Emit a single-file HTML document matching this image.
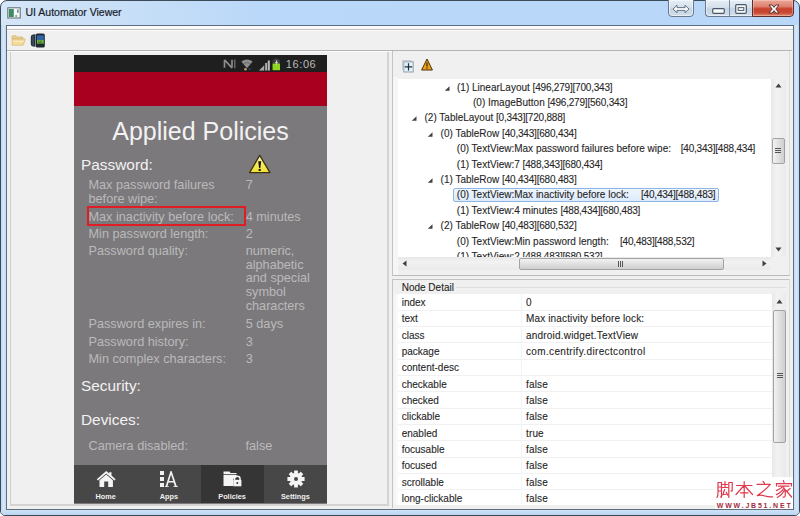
<!DOCTYPE html>
<html><head><meta charset="utf-8">
<style>
*{margin:0;padding:0;box-sizing:border-box}
html,body{width:800px;height:516px;overflow:hidden;background:#fff}
body{position:relative;font-family:"Liberation Sans",sans-serif}
.a{position:absolute}
.t{position:absolute;white-space:pre;line-height:1}
</style></head><body>
<div class="a" style="left:0;top:0;width:800px;height:516px;border-radius:7px 7px 5px 5px;background:linear-gradient(90deg,#d5e6f7 0px,#c8dff7 120px,#bad8f9 260px,#b8d7f9 100%);border:1px solid #3d4a57"></div>
<svg class="a" style="left:6.5px;top:6.5px" width="14" height="12" viewBox="0 0 14 12">
 <rect x="0.8" y="0.8" width="12.4" height="10.2" fill="#f4f9fb" stroke="#5e6870" stroke-width="1"/>
 <rect x="1.8" y="2" width="5" height="8" fill="#3f8c64"/>
 <rect x="8.2" y="8" width="2" height="2" fill="#9aa890"/>
 <rect x="10.4" y="2.4" width="1" height="3.4" fill="#404850"/>
</svg>
<div class="t" style="left:25.50px;top:7.00px;font-size:10.5px;color:#18222c;-webkit-text-stroke:0.2px #18222c;">UI Automator Viewer</div>
<div class="a" style="left:1px;top:25px;width:5px;height:486px;background:linear-gradient(90deg,#bdd6f2,#d6e7f8 50%,#c4dbf4)"></div>
<div class="a" style="left:794px;top:25px;width:5px;height:486px;background:linear-gradient(90deg,#c4dbf4,#d6e7f8 50%,#bdd6f2)"></div>
<div class="a" style="left:1px;top:510px;width:798px;height:5px;border-radius:0 0 4px 4px;background:linear-gradient(#d0e3f7,#c2daf4 60%,#b8d3f0)"></div>
<div class="a" style="left:668px;top:-1px;width:26px;height:18px;border:1px solid #6a7a8c;border-radius:0 0 4px 4px;background:linear-gradient(#e6eef6,#d6e1ec 45%,#c4d3e3 55%,#d2deea);box-shadow:inset 0 0 0 1px rgba(255,255,255,0.5)"></div>
<div class="a" style="left:705px;top:-1px;width:48px;height:18px;border:1px solid #6a7a8c;border-right:none;border-radius:0 0 0 4px;background:linear-gradient(#e6eef6,#d6e1ec 45%,#c4d3e3 55%,#d2deea);box-shadow:inset 0 0 0 1px rgba(255,255,255,0.5)"></div>
<div class="a" style="left:729px;top:0;width:1px;height:16px;background:#7a8a9c"></div>
<div class="a" style="left:752px;top:-1px;width:42px;height:18px;border:1px solid #5a3030;border-radius:0 0 4px 0;background:linear-gradient(#eba99a,#de8070 40%,#c8412c 55%,#c94a35 80%,#e08a70);box-shadow:inset 0 0 0 1px rgba(255,220,210,0.4)"></div>
<svg class="a" style="left:672px;top:4px" width="18" height="10" viewBox="0 0 18 10">
 <path d="M1 5L5 1.2V3.6H13V1.2L17 5L13 8.8V6.4H5V8.8z" fill="#fafafa" stroke="#56687c" stroke-width="0.9" stroke-linejoin="round"/>
</svg>
<svg class="a" style="left:712px;top:7.5px" width="13" height="6" viewBox="0 0 13 6">
 <rect x="0.7" y="0.7" width="11.6" height="4.6" rx="1" fill="#fafafa" stroke="#4a5a6c" stroke-width="1.2"/>
</svg>
<svg class="a" style="left:735px;top:3.5px" width="12" height="10" viewBox="0 0 12 10">
 <rect x="0.7" y="0.7" width="10.6" height="8.6" rx="1" fill="#fafafa" stroke="#4a5a6c" stroke-width="1.2"/>
 <rect x="3.2" y="3.6" width="5.6" height="2.8" fill="#fafafa" stroke="#4a5a6c" stroke-width="1"/>
</svg>
<svg class="a" style="left:768px;top:3.5px" width="12" height="10" viewBox="0 0 12 10">
 <path d="M1 1H4.2L6 3.4L7.8 1H11L7.8 5L11 9H7.8L6 6.6L4.2 9H1L4.2 5z" fill="#fbfbfb" stroke="#4a2a26" stroke-width="0.9" stroke-linejoin="round"/>
</svg>
<div class="a" style="left:6px;top:25px;width:788px;height:485px;border:1px solid #5f6e7e;background:#f0f0f0"></div>
<div class="a" style="left:7px;top:26px;width:786px;height:3px;background:#fafafa"></div>
<div class="a" style="left:7px;top:29px;width:786px;height:1px;background:#c4c1be"></div>
<div class="a" style="left:7px;top:30px;width:786px;height:1px;background:#fcfcfc"></div>
<svg class="a" style="left:11px;top:35px" width="15" height="11" viewBox="0 0 15 11">
 <path d="M1 1.5Q1 0.8 1.8 0.8H5L6.2 2H11.5Q12 2 12 2.6V4H1z" fill="#e9cf8f" stroke="#d2b26a" stroke-width="0.7"/>
 <path d="M1.2 4.2H14.3L12.2 10.2H1.2z" fill="#f5dc9c" stroke="#d6b56c" stroke-width="0.7"/>
 <path d="M2.5 6.5H12.5" stroke="#fbecc0" stroke-width="1"/>
</svg>
<svg class="a" style="left:30px;top:33px" width="16" height="15" viewBox="0 0 16 15">
 <path d="M0.8 4Q0.8 1.8 3 1.6L5.5 1.2V13.8L3 13.4Q0.8 13.2 0.8 11z" fill="#26323c"/>
 <path d="M3 2.5V12.5" stroke="#5a6a78" stroke-width="0.8"/>
 <path d="M5.5 1.4V13.6" stroke="#a8b4c0" stroke-width="0.5"/>
 <rect x="5.8" y="0.6" width="9" height="14" rx="1.6" fill="#1e2830"/>
 <rect x="7" y="2.4" width="6.8" height="4.6" fill="#2f66a8"/>
 <rect x="7" y="7" width="6.8" height="3.6" fill="#6cb03c"/>
 <path d="M8 8.2h1.2M10.2 8.2h1.4M8.6 9.4h2.6" stroke="#2a4a20" stroke-width="0.6"/>
</svg>
<div class="a" style="left:10px;top:51px;width:379px;height:455px;border-left:1px solid #cfcfcf;border-top:1px solid #e0e0e0;border-right:2px solid #d4d4d4;border-bottom:2px solid #d6d3d0;background:#f0f0f0"></div>
<div class="a" style="left:7px;top:50px;width:785px;height:1px;background:#b4b4b4"></div>
<div class="a" style="left:7px;top:51px;width:785px;height:1px;background:#fafafa"></div>
<div class="a" style="left:74px;top:55px;width:253px;height:448.5px;background:#7c797c;overflow:hidden">
 <div class="a" style="left:0;top:0;width:253px;height:16.5px;background:#1f1f20"></div>
 <div class="a" style="left:0;top:16.5px;width:253px;height:34.5px;background:#a8001e"></div>
 <div class="a" style="left:0;top:410px;width:253px;height:38px;background:#474747"></div>
 <div class="a" style="left:127px;top:410px;width:63px;height:38px;background:#353535"></div>
</div>
<div class="t" style="left:100.50px;width:200px;text-align:center;top:118.60px;font-size:25px;color:#f2f2f2;">Applied Policies</div>
<div class="t" style="left:81.00px;top:157.00px;font-size:15.4px;color:#f2f2f2;">Password:</div>
<div class="t" style="left:88.50px;top:179.40px;font-size:12.7px;color:#bababa;">Max password failures</div>
<div class="t" style="left:88.50px;top:192.90px;font-size:12.7px;color:#bababa;">before wipe:</div>
<div class="t" style="left:245.70px;top:179.40px;font-size:12.7px;color:#bababa;">7</div>
<div class="t" style="left:88.50px;top:210.90px;font-size:12.7px;color:#bababa;">Max inactivity before lock:</div>
<div class="t" style="left:245.70px;top:210.90px;font-size:12.7px;color:#bababa;">4 minutes</div>
<div class="t" style="left:88.50px;top:228.00px;font-size:12.7px;color:#bababa;">Min password length:</div>
<div class="t" style="left:245.70px;top:228.00px;font-size:12.7px;color:#bababa;">2</div>
<div class="t" style="left:88.50px;top:245.00px;font-size:12.7px;color:#bababa;">Password quality:</div>
<div class="t" style="left:245.70px;top:245.00px;font-size:12.7px;color:#bababa;">numeric,</div>
<div class="t" style="left:245.70px;top:258.70px;font-size:12.7px;color:#bababa;">alphabetic</div>
<div class="t" style="left:245.70px;top:272.40px;font-size:12.7px;color:#bababa;">and special</div>
<div class="t" style="left:245.70px;top:286.10px;font-size:12.7px;color:#bababa;">symbol</div>
<div class="t" style="left:245.70px;top:299.80px;font-size:12.7px;color:#bababa;">characters</div>
<div class="t" style="left:88.50px;top:317.90px;font-size:12.7px;color:#bababa;">Password expires in:</div>
<div class="t" style="left:245.70px;top:317.90px;font-size:12.7px;color:#bababa;">5 days</div>
<div class="t" style="left:88.50px;top:335.90px;font-size:12.7px;color:#bababa;">Password history:</div>
<div class="t" style="left:245.70px;top:335.90px;font-size:12.7px;color:#bababa;">3</div>
<div class="t" style="left:88.50px;top:353.00px;font-size:12.7px;color:#bababa;">Min complex characters:</div>
<div class="t" style="left:245.70px;top:353.00px;font-size:12.7px;color:#bababa;">3</div>
<div class="t" style="left:81.00px;top:378.20px;font-size:15.4px;color:#f2f2f2;">Security:</div>
<div class="t" style="left:81.00px;top:412.20px;font-size:15.4px;color:#f2f2f2;">Devices:</div>
<div class="t" style="left:88.50px;top:439.80px;font-size:12.7px;color:#bababa;">Camera disabled:</div>
<div class="t" style="left:245.50px;top:439.80px;font-size:12.7px;color:#bababa;">false</div>
<div class="a" style="left:86.6px;top:205.8px;width:159.2px;height:19.8px;border:2.2px solid #e01c24"></div>
<svg class="a" style="left:249px;top:153.5px" width="22" height="20" viewBox="0 0 22 20">
 <defs><linearGradient id="wg" x1="0" y1="0" x2="0" y2="1"><stop offset="0" stop-color="#fffbe0"/><stop offset="0.45" stop-color="#f8ec60"/><stop offset="1" stop-color="#efe030"/></linearGradient></defs>
 <path d="M10.7 1.4L21 18.6H0.6z" fill="url(#wg)" stroke="#3c3410" stroke-width="1.3" stroke-linejoin="round"/>
 <path d="M9.2 7.2H12.2L11.3 14H10.1z" fill="#111"/>
 <circle cx="10.7" cy="15.9" r="1.2" fill="#111"/>
</svg>
<div class="t" style="left:285.80px;top:58.60px;font-size:11px;color:#b9b9b9;letter-spacing:0.6px;">16:06</div>
<svg class="a" style="left:223px;top:58px" width="60" height="13" viewBox="0 0 60 13">
 <path d="M1.5 1.8v8M1.5 1.8l7.5 8M9 1.8v8" stroke="#8c8c8c" stroke-width="1.7" fill="none"/>
 <path d="M11.8 1.5v8.8" stroke="#7a7a7a" stroke-width="1.2"/>
 <path d="M18.3 3.6q5.7-4.2 11.4 0l-5.7 6.6z" fill="#8e8e8e"/>
 <path d="M20.8 5.6q3.2-2.2 6.4 0" stroke="#5a5a5a" stroke-width="0.7" fill="none"/>
 <circle cx="22.5" cy="11.3" r="1.3" fill="#d89a60"/>
 <path d="M25.5 10.3l1.2 1.6l1.2-1.6" stroke="#2a5090" stroke-width="1" fill="none"/>
 <path d="M36 12.5L47 1.5V12.5z" fill="#3c3c3c"/>
 <path d="M36 12.5L41 7.5V12.5z" fill="#a8a8a8"/>
 <rect x="42.2" y="5" width="1.8" height="7.5" fill="#b0b0b0"/>
 <rect x="44.8" y="2.5" width="2" height="10" fill="#b8b8b8"/>
 <rect x="51.8" y="0.6" width="2.6" height="1.2" fill="#505050"/>
 <rect x="49.6" y="1.6" width="7.4" height="10.6" rx="0.6" fill="#3e3e3e"/>
 <rect x="49.6" y="5.6" width="7.4" height="6.6" fill="#8ed61c"/>
 <path d="M53.6 2.2l-1.6 3h1.5l-0.7 2.4l2.4-3.4h-1.6l0.8-2z" fill="#e8e8e8"/>
</svg>
<svg class="a" style="left:96px;top:470px" width="20" height="18" viewBox="0 0 20 18">
 <path d="M10.2 1L0.8 9.2L2 10.4L10.2 3.4L18.4 10.4L19.6 9.2L15.5 5.6V2.2H13.2V3.6z" fill="#f4f4f4"/>
 <path d="M3.5 10.2L10.2 4.6L16.9 10.2V17H12.2V11.5H8.2V17H3.5z" fill="#f4f4f4"/>
</svg>
<svg class="a" style="left:159px;top:470px" width="20" height="18" viewBox="0 0 20 18">
 <rect x="1" y="1" width="4" height="4" fill="#f2f2f2"/>
 <rect x="1" y="7" width="4" height="4" fill="#f2f2f2"/>
 <rect x="1" y="13" width="4" height="4" fill="#f2f2f2"/>
 <path d="M11.5 1L6.6 16.2H5.8V17H9.8V16.2H8.4L9.6 12.4H14.6L15.9 16.2H14.4V17H19V16.2H17.8L12.6 1z M10 11.1L12.1 4.6L14.2 11.1z" fill="#f2f2f2" fill-rule="evenodd"/>
</svg>
<svg class="a" style="left:223px;top:471px" width="19" height="16" viewBox="0 0 19 16">
 <path d="M0.5 0.5H6.5L7.5 2H13.5V3.2H0.5z" fill="#f4f4f4"/>
 <path d="M0.5 4H13.5V6.5Q10 6.5 10 10V15H0.5z" fill="#f4f4f4"/>
 <path d="M11.6 9V7.6Q11.6 5.2 14.3 5.2Q17 5.2 17 7.6V9" stroke="#f4f4f4" stroke-width="1.5" fill="none"/>
 <rect x="10.2" y="8.8" width="8.2" height="6.5" fill="#f4f4f4"/>
 <circle cx="14.3" cy="12" r="1" fill="#353535"/>
</svg>
<svg class="a" style="left:286.5px;top:470px" width="18" height="18" viewBox="-9 -9 18 18">
 <g fill="#f4f4f4">
  <circle r="6.2"/>
  <rect x="-1.9" y="-8.6" width="3.8" height="17.2" rx="0.5"/>
  <rect x="-1.9" y="-8.6" width="3.8" height="17.2" rx="0.5" transform="rotate(45)"/>
  <rect x="-1.9" y="-8.6" width="3.8" height="17.2" rx="0.5" transform="rotate(90)"/>
  <rect x="-1.9" y="-8.6" width="3.8" height="17.2" rx="0.5" transform="rotate(135)"/>
 </g>
 <circle r="2" fill="#474747"/>
</svg>
<div class="t" style="left:5.60px;width:200px;text-align:center;top:493.20px;font-size:7.3px;color:#f0f0f0;font-weight:bold;">Home</div>
<div class="t" style="left:68.90px;width:200px;text-align:center;top:493.20px;font-size:7.3px;color:#f0f0f0;font-weight:bold;">Apps</div>
<div class="t" style="left:132.10px;width:200px;text-align:center;top:493.20px;font-size:7.3px;color:#f0f0f0;font-weight:bold;">Policies</div>
<div class="t" style="left:195.40px;width:200px;text-align:center;top:493.20px;font-size:7.3px;color:#f0f0f0;font-weight:bold;">Settings</div>
<div class="a" style="left:392px;top:51px;width:398px;height:225px;border-left:1px solid #c4c4c4;border-right:1px solid #dcdcdc;border-bottom:1px solid #bababa;background:#f0f0f0"></div>
<div class="a" style="left:393px;top:77px;width:5px;height:198px;background:#f6f6f6"></div>
<div class="a" style="left:398px;top:79px;width:373px;height:178px;background:#fff;overflow:hidden">
<svg class="a" style="left:45.60px;top:6.60px" width="6" height="5" viewBox="0 0 6 5"><path d="M5.5 0.3V4.7H0.8z" fill="#404040"/></svg>
<div class="t" style="left:59.00px;top:3.60px;font-size:10px;color:#262626;-webkit-text-stroke:0.1px #262626;">(1) LinearLayout <span style="letter-spacing:-0.2px">[496,279][700,343]</span></div>
<div class="t" style="left:75.00px;top:19.01px;font-size:10px;color:#262626;-webkit-text-stroke:0.1px #262626;">(0) ImageButton <span style="letter-spacing:-0.2px">[496,279][560,343]</span></div>
<svg class="a" style="left:13.10px;top:37.42px" width="6" height="5" viewBox="0 0 6 5"><path d="M5.5 0.3V4.7H0.8z" fill="#404040"/></svg>
<div class="t" style="left:26.50px;top:34.42px;font-size:10px;color:#262626;-webkit-text-stroke:0.1px #262626;">(2) TableLayout <span style="letter-spacing:-0.2px">[0,343][720,888]</span></div>
<svg class="a" style="left:29.20px;top:52.83px" width="6" height="5" viewBox="0 0 6 5"><path d="M5.5 0.3V4.7H0.8z" fill="#404040"/></svg>
<div class="t" style="left:42.60px;top:49.83px;font-size:10px;color:#262626;-webkit-text-stroke:0.1px #262626;">(0) TableRow <span style="letter-spacing:-0.2px">[40,343][680,434]</span></div>
<div class="t" style="left:58.80px;top:65.24px;font-size:10px;color:#262626;-webkit-text-stroke:0.1px #262626;">(0) TextView:Max password failures before wipe:</div>
<div class="t" style="left:282.70px;top:65.24px;font-size:10px;color:#262626;-webkit-text-stroke:0.1px #262626;letter-spacing:-0.2px;">[40,343][488,434]</div>
<div class="t" style="left:58.80px;top:80.65px;font-size:10px;color:#262626;-webkit-text-stroke:0.1px #262626;">(1) TextView:7 <span style="letter-spacing:-0.2px">[488,343][680,434]</span></div>
<svg class="a" style="left:29.20px;top:99.06px" width="6" height="5" viewBox="0 0 6 5"><path d="M5.5 0.3V4.7H0.8z" fill="#404040"/></svg>
<div class="t" style="left:42.60px;top:96.06px;font-size:10px;color:#262626;-webkit-text-stroke:0.1px #262626;">(1) TableRow <span style="letter-spacing:-0.2px">[40,434][680,483]</span></div>
<div class="a" style="left:55.39999999999998px;top:108.9px;width:266px;height:14.5px;border:1px solid #8fb6e3;border-radius:2px;background:linear-gradient(#eef5fd,#dcebfc)"></div>
<div class="t" style="left:58.80px;top:111.47px;font-size:10px;color:#262626;-webkit-text-stroke:0.1px #262626;">(0) TextView:Max inactivity before lock:</div>
<div class="t" style="left:243.00px;top:111.47px;font-size:10px;color:#262626;-webkit-text-stroke:0.1px #262626;letter-spacing:-0.2px;">[40,434][488,483]</div>
<div class="t" style="left:58.80px;top:126.88px;font-size:10px;color:#262626;-webkit-text-stroke:0.1px #262626;">(1) TextView:4 minutes <span style="letter-spacing:-0.2px">[488,434][680,483]</span></div>
<svg class="a" style="left:29.20px;top:145.29px" width="6" height="5" viewBox="0 0 6 5"><path d="M5.5 0.3V4.7H0.8z" fill="#404040"/></svg>
<div class="t" style="left:42.60px;top:142.29px;font-size:10px;color:#262626;-webkit-text-stroke:0.1px #262626;">(2) TableRow <span style="letter-spacing:-0.2px">[40,483][680,532]</span></div>
<div class="t" style="left:58.80px;top:157.70px;font-size:10px;color:#262626;-webkit-text-stroke:0.1px #262626;">(0) TextView:Min password length:</div>
<div class="t" style="left:222.00px;top:157.70px;font-size:10px;color:#262626;-webkit-text-stroke:0.1px #262626;letter-spacing:-0.2px;">[40,483][488,532]</div>
<div class="t" style="left:58.80px;top:173.11px;font-size:10px;color:#262626;-webkit-text-stroke:0.1px #262626;">(1) TextView:2 <span style="letter-spacing:-0.2px">[488,483][680,532]</span></div>
</div>
<div class="a" style="left:771px;top:79px;width:15px;height:178px;background:linear-gradient(90deg,#e8e8e8,#f2f2f2 40%,#eaeaea)"></div>
<svg class="a" style="left:775px;top:83px" width="7" height="5" viewBox="0 0 7 5"><path d="M3.5 0.5L6.5 4.5H0.5z" fill="#404040"/></svg>
<svg class="a" style="left:775px;top:247px" width="7" height="5" viewBox="0 0 7 5"><path d="M3.5 4.5L6.5 0.5H0.5z" fill="#404040"/></svg>
<div class="a" style="left:771.5px;top:138px;width:13px;height:26px;border:1px solid #a3a3a3;border-radius:2px;background:linear-gradient(90deg,#f2f2f2,#e0e0e0 50%,#cfcfcf)"></div>
<div class="a" style="left:775px;top:148px;width:6px;height:1px;background:#555;box-shadow:0 2px 0 #555,0 4px 0 #555"></div>
<div class="a" style="left:398px;top:257px;width:373px;height:13px;background:linear-gradient(#e8e8e8,#f2f2f2 40%,#eaeaea)"></div>
<div class="a" style="left:771px;top:257px;width:15px;height:13px;background:#f0f0f0"></div>
<svg class="a" style="left:402px;top:260px" width="5" height="7" viewBox="0 0 5 7"><path d="M0.5 3.5L4.5 0.5V6.5z" fill="#404040"/></svg>
<svg class="a" style="left:762px;top:260px" width="5" height="7" viewBox="0 0 5 7"><path d="M4.5 3.5L0.5 0.5V6.5z" fill="#404040"/></svg>
<div class="a" style="left:518.5px;top:257.5px;width:205px;height:12px;border:1px solid #a3a3a3;border-radius:2px;background:linear-gradient(#f2f2f2,#e0e0e0 50%,#cfcfcf)"></div>
<div class="a" style="left:618px;top:260.5px;width:1px;height:6px;background:#555;box-shadow:2px 0 0 #555,4px 0 0 #555"></div>
<svg class="a" style="left:402px;top:59.5px" width="12" height="13" viewBox="0 0 12 13">
 <path d="M0.6 10V0.6H9.5" fill="none" stroke="#c0c8d0" stroke-width="1"/>
 <rect x="1.8" y="1.8" width="9.4" height="10.2" fill="#e2f2fb" stroke="#9aa6b2" stroke-width="1.1"/>
 <path d="M6.5 3.2V10.6M2.8 6.9H10.2" stroke="#1e2e3c" stroke-width="1.2"/>
</svg>
<svg class="a" style="left:421px;top:58px" width="12" height="13" viewBox="0 0 12 13">
 <path d="M6 1L11.4 12H0.6z" fill="#e8a020" stroke="#4a3000" stroke-width="1" stroke-linejoin="round"/>
 <path d="M6 4.6V8.6" stroke="#2a1800" stroke-width="1.1"/>
 <rect x="5.4" y="9.4" width="1.2" height="1.2" fill="#2a1800"/>
</svg>
<div class="a" style="left:392px;top:279px;width:398px;height:229px;border-top:1px solid #c2c2c2;border-left:1px solid #c4c4c4;border-right:1px solid #dcdcdc;background:#f0f0f0"></div>
<div class="a" style="left:393px;top:294px;width:380px;height:211px;background:linear-gradient(90deg,#f2f2f2,#fbfbfb 5px,#fbfbfb)"></div>
<div class="t" style="left:401.70px;top:283.40px;font-size:10px;color:#262626;-webkit-text-stroke:0.1px #262626;">Node Detail</div>
<div class="a" style="left:456px;top:287px;width:330px;height:1px;background:#dedede"></div>
<div class="a" style="left:398px;top:294px;width:374px;height:211px;background:#fff;overflow:hidden">
<div class="a" style="left:0;top:15.60px;width:374px;height:1px;background:#f1f1f1"></div>
<div class="t" style="left:3.70px;top:3.90px;font-size:10px;color:#262626;-webkit-text-stroke:0.1px #262626;">index</div>
<div class="t" style="left:128.00px;top:3.90px;font-size:10px;color:#262626;-webkit-text-stroke:0.1px #262626;letter-spacing:0.15px;">0</div>
<div class="a" style="left:0;top:31.93px;width:374px;height:1px;background:#f1f1f1"></div>
<div class="t" style="left:3.70px;top:20.23px;font-size:10px;color:#262626;-webkit-text-stroke:0.1px #262626;">text</div>
<div class="t" style="left:128.00px;top:20.23px;font-size:10px;color:#262626;-webkit-text-stroke:0.1px #262626;letter-spacing:0.14px;">Max inactivity before lock:</div>
<div class="a" style="left:0;top:48.26px;width:374px;height:1px;background:#f1f1f1"></div>
<div class="t" style="left:3.70px;top:36.56px;font-size:10px;color:#262626;-webkit-text-stroke:0.1px #262626;">class</div>
<div class="t" style="left:128.00px;top:36.56px;font-size:10px;color:#262626;-webkit-text-stroke:0.1px #262626;letter-spacing:0.2px;">android.widget.TextView</div>
<div class="a" style="left:0;top:64.59px;width:374px;height:1px;background:#f1f1f1"></div>
<div class="t" style="left:3.70px;top:52.89px;font-size:10px;color:#262626;-webkit-text-stroke:0.1px #262626;">package</div>
<div class="t" style="left:128.00px;top:52.89px;font-size:10px;color:#262626;-webkit-text-stroke:0.1px #262626;letter-spacing:0.35px;">com.centrify.directcontrol</div>
<div class="a" style="left:0;top:80.92px;width:374px;height:1px;background:#f1f1f1"></div>
<div class="t" style="left:3.70px;top:69.22px;font-size:10px;color:#262626;-webkit-text-stroke:0.1px #262626;">content-desc</div>
<div class="t" style="left:128.00px;top:69.22px;font-size:10px;color:#262626;-webkit-text-stroke:0.1px #262626;letter-spacing:0.15px;"></div>
<div class="a" style="left:0;top:97.25px;width:374px;height:1px;background:#f1f1f1"></div>
<div class="t" style="left:3.70px;top:85.55px;font-size:10px;color:#262626;-webkit-text-stroke:0.1px #262626;">checkable</div>
<div class="t" style="left:128.00px;top:85.55px;font-size:10px;color:#262626;-webkit-text-stroke:0.1px #262626;letter-spacing:0.15px;">false</div>
<div class="a" style="left:0;top:113.58px;width:374px;height:1px;background:#f1f1f1"></div>
<div class="t" style="left:3.70px;top:101.88px;font-size:10px;color:#262626;-webkit-text-stroke:0.1px #262626;">checked</div>
<div class="t" style="left:128.00px;top:101.88px;font-size:10px;color:#262626;-webkit-text-stroke:0.1px #262626;letter-spacing:0.15px;">false</div>
<div class="a" style="left:0;top:129.91px;width:374px;height:1px;background:#f1f1f1"></div>
<div class="t" style="left:3.70px;top:118.21px;font-size:10px;color:#262626;-webkit-text-stroke:0.1px #262626;">clickable</div>
<div class="t" style="left:128.00px;top:118.21px;font-size:10px;color:#262626;-webkit-text-stroke:0.1px #262626;letter-spacing:0.15px;">false</div>
<div class="a" style="left:0;top:146.24px;width:374px;height:1px;background:#f1f1f1"></div>
<div class="t" style="left:3.70px;top:134.54px;font-size:10px;color:#262626;-webkit-text-stroke:0.1px #262626;">enabled</div>
<div class="t" style="left:128.00px;top:134.54px;font-size:10px;color:#262626;-webkit-text-stroke:0.1px #262626;letter-spacing:0.15px;">true</div>
<div class="a" style="left:0;top:162.57px;width:374px;height:1px;background:#f1f1f1"></div>
<div class="t" style="left:3.70px;top:150.87px;font-size:10px;color:#262626;-webkit-text-stroke:0.1px #262626;">focusable</div>
<div class="t" style="left:128.00px;top:150.87px;font-size:10px;color:#262626;-webkit-text-stroke:0.1px #262626;letter-spacing:0.15px;">false</div>
<div class="a" style="left:0;top:178.90px;width:374px;height:1px;background:#f1f1f1"></div>
<div class="t" style="left:3.70px;top:167.20px;font-size:10px;color:#262626;-webkit-text-stroke:0.1px #262626;">focused</div>
<div class="t" style="left:128.00px;top:167.20px;font-size:10px;color:#262626;-webkit-text-stroke:0.1px #262626;letter-spacing:0.15px;">false</div>
<div class="a" style="left:0;top:195.23px;width:374px;height:1px;background:#f1f1f1"></div>
<div class="t" style="left:3.70px;top:183.53px;font-size:10px;color:#262626;-webkit-text-stroke:0.1px #262626;">scrollable</div>
<div class="t" style="left:128.00px;top:183.53px;font-size:10px;color:#262626;-webkit-text-stroke:0.1px #262626;letter-spacing:0.15px;">false</div>
<div class="a" style="left:0;top:211.56px;width:374px;height:1px;background:#f1f1f1"></div>
<div class="t" style="left:3.70px;top:199.86px;font-size:10px;color:#262626;-webkit-text-stroke:0.1px #262626;">long-clickable</div>
<div class="t" style="left:128.00px;top:199.86px;font-size:10px;color:#262626;-webkit-text-stroke:0.1px #262626;letter-spacing:0.15px;">false</div>
<div class="a" style="left:122.5px;top:0;width:1px;height:212px;background:#f1f3f5"></div>
</div>
<div class="a" style="left:772px;top:293px;width:14px;height:212px;background:linear-gradient(90deg,#e8e8e8,#f2f2f2 40%,#eaeaea)"></div>
<svg class="a" style="left:776px;top:299px" width="7" height="5" viewBox="0 0 7 5"><path d="M3.5 0.5L6.5 4.5H0.5z" fill="#404040"/></svg>
<div class="a" style="left:773px;top:309.5px;width:12.5px;height:133px;border:1px solid #a3a3a3;border-radius:2px;background:linear-gradient(90deg,#f2f2f2,#e0e0e0 50%,#cfcfcf)"></div>
<div class="a" style="left:776.5px;top:372.5px;width:6px;height:1px;background:#555;box-shadow:0 2px 0 #555,0 4px 0 #555"></div>
<div class="a" style="left:715px;top:477px;width:78px;height:32px;background:rgba(255,255,255,0.92)"></div>
<svg class="a" style="left:716px;top:480px" width="78" height="30" viewBox="0 0 78 30">
 <g stroke="#e0384c" stroke-width="1.2" fill="none" stroke-linecap="round">
  <path d="M2 2.5V12.5Q2 16 1 17.5M2 2.5H5.5V17Q5.5 17.5 4.5 17M2 7H5.5M2 11H5.5"/>
  <path d="M6.6 4.5H11.4M9 1.5V7.5M6.3 7.5H11.8M8.6 9.5L6.8 14.8L11.3 14M10.3 12.2L11.8 15.2"/>
  <path d="M12.8 2.5H16.2V10.5Q16.2 11.5 15 11M12.8 2.5V17.5"/>
  <path d="M20.5 5.5H36M28.2 1.5V17.5M27.6 6L20 14.5M28.8 6L36.5 14.5M24.5 12.8H32"/>
  <path d="M47 1.4L48.4 3.2M41 4.3H54.3M54.3 4.3Q50 9.5 41.4 15.6M41.4 15.6Q45 14.6 49 16Q52 17 56.6 16.8"/>
  <path d="M67.4 0.6L68 2.4M60.5 6V3.6H75.5V6M62.5 6.2H73M67 6.6Q64 9 60.4 10.6M67.6 8.6Q66 12 60.4 14.6M68.4 10.2Q66 15 61.4 17.6M67.8 7.6Q70.2 11 69 16.4Q68.5 17.5 67 17M69.6 10L75.6 17M74.2 8.4L71 11.2"/>
 </g>
</svg>
<div class="t" style="left:716.80px;top:502.00px;font-size:7px;color:#a52a3c;font-weight:bold;letter-spacing:1.8px;">WWW.JB51.NET</div>
</body></html>
